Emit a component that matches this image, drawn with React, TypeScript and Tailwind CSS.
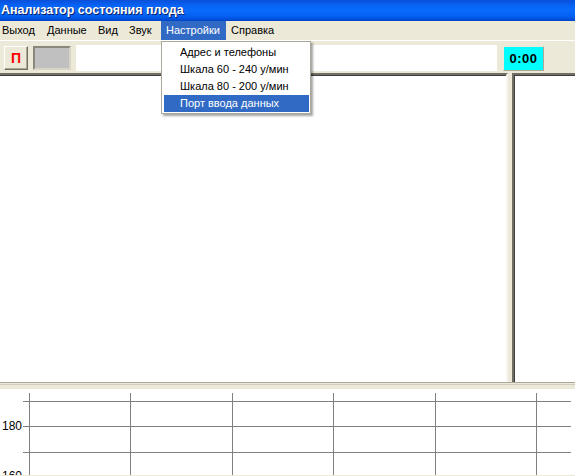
import React from 'react';

const UI_FONT = { fontFamily: '"Liberation Sans", Arial, sans-serif' };

const MENU = [
  { label: 'Выход', w: 'w-[41px]', pl: 'pl-[2px]' },
  { label: 'Данные', w: 'w-[51px]', pl: 'pl-[6px]' },
  { label: 'Вид', w: 'w-[31px]', pl: 'pl-[6px]' },
  { label: 'Звук', w: 'w-[38px]', pl: 'pl-[6px]' },
  { label: 'Настройки', w: 'w-[65px]', pl: 'pl-[5px]', active: true },
  { label: 'Справка', w: 'w-[60px]', pl: 'pl-[5px]' },
];

const DROPDOWN = ['Адрес и телефоны', 'Шкала 60 - 240 у/мин', 'Шкала 80 - 200 у/мин', 'Порт ввода данных'];

// grid of the trend chart at the bottom
const VLINES = [29, 130, 232, 333, 435, 536];
const HLINES = [402, 427, 453];

const Chart: React.FC = () => (
  <svg width="575" height="86" className="block">
    {VLINES.map((x) => (
      <line key={x} x1={x + 0.5} y1={4} x2={x + 0.5} y2={86} stroke="#808080" strokeWidth="1" />
    ))}
    {HLINES.map((y) => (
      <line key={y} x1={23} y1={y - 390 + 0.5} x2={571} y2={y - 390 + 0.5} stroke="#808080" strokeWidth="1" />
    ))}
    <text x="22" y="41" textAnchor="end" fontSize="12" fontFamily="Liberation Sans, Arial, sans-serif" fill="#000">
      180
    </text>
    <text x="22" y="91" textAnchor="end" fontSize="12" fontFamily="Liberation Sans, Arial, sans-serif" fill="#000">
      160
    </text>
  </svg>
);

export default function App() {
  return (
    <div className="relative w-[575px] h-[476px] overflow-hidden bg-[#ECE9D8] text-[11px] text-black" style={UI_FONT}>
      {/* title bar */}
      <div className="h-[21px] flex items-center pl-[1px] bg-[linear-gradient(180deg,#0a4fd8_0%,#0762f5_25%,#0a6bfb_50%,#035ef0_80%,#0045c8_100%)]">
        <span className="text-[12.5px] font-bold text-white leading-none [text-shadow:1px_1px_0_#0a1e6a]">
          Анализатор состояния плода
        </span>
      </div>

      {/* menu bar */}
      <div className="h-[19px] flex items-stretch">
        {MENU.map((m) => (
          <div
            key={m.label}
            className={`${m.w} ${m.pl} flex items-center ${m.active ? 'bg-[#316AC5] text-white' : ''}`}
          >
            {m.label}
          </div>
        ))}
      </div>
      <div className="h-[1px] bg-white" />

      {/* toolbar */}
      <div className="h-[32px] flex items-start pt-[5px]">
        <div className="ml-[4px] w-[24px] h-[24px] flex items-center justify-center bg-[#ECE9D8] border border-t-white border-l-white border-b-[#716F64] border-r-[#716F64] shadow-[inset_-1px_-1px_0_#ACA899]">
          <span className="text-[14px] font-bold text-[#ff0000] leading-none">П</span>
        </div>
        <div className="ml-[5px] w-[38px] h-[24px] bg-[#C0C0C0] border-2 border-t-[#8a887c] border-l-[#8a887c] border-b-[#d8d5c7] border-r-[#d8d5c7]" />
        <div className="ml-[5px] w-[421px] h-[26px] -mt-[1px] bg-white" />
        <div className="ml-[6px] w-[41px] h-[25px] bg-[#00FFFF] border border-t-[#ECE9D8] border-l-[#ECE9D8] border-b-[#ACA899] border-r-[#ACA899] flex items-center justify-center">
          <span className="text-[13px] font-bold leading-none tracking-[0.5px]">0:00</span>
        </div>
      </div>

      {/* main panels */}
      <div className="h-[309px] flex">
        <div className="w-[508px] bg-white border-t-2 border-r-2 border-b-0 border-t-[#716F64] border-r-[#F7F6F0] shadow-[inset_0_1px_0_#404040]" />
        <div className="w-[4px]" />
        <div className="flex-1 bg-white border-t-2 border-l-2 border-t-[#716F64] border-l-[#716F64] shadow-[inset_1px_1px_0_#404040]" />
      </div>
      <div className="h-[1px] bg-[#ACA899]" />
      <div className="h-[1px] bg-[#ECE9D8]" />
      <div className="h-[1px] bg-[#D0CDBE]" />
      <div className="h-[4px]" />

      {/* chart */}
      <div className="h-[86px] bg-white">
        <Chart />
      </div>

      {/* open dropdown of "Настройки" */}
      <div className="absolute left-[161px] top-[41px] w-[150px] bg-white border border-[#ACA899] pt-[2px] pb-[1px] pl-[1px] pr-[1px] shadow-[2px_2px_2px_rgba(0,0,0,0.35)]">
        {DROPDOWN.map((item, i) => (
          <div
            key={item}
            className={`h-[17px] ml-[1px] pl-[16px] flex items-center whitespace-nowrap ${
              i === DROPDOWN.length - 1 ? 'bg-[#316AC5] text-white' : ''
            }`}
          >
            {item}
          </div>
        ))}
      </div>
    </div>
  );
}
